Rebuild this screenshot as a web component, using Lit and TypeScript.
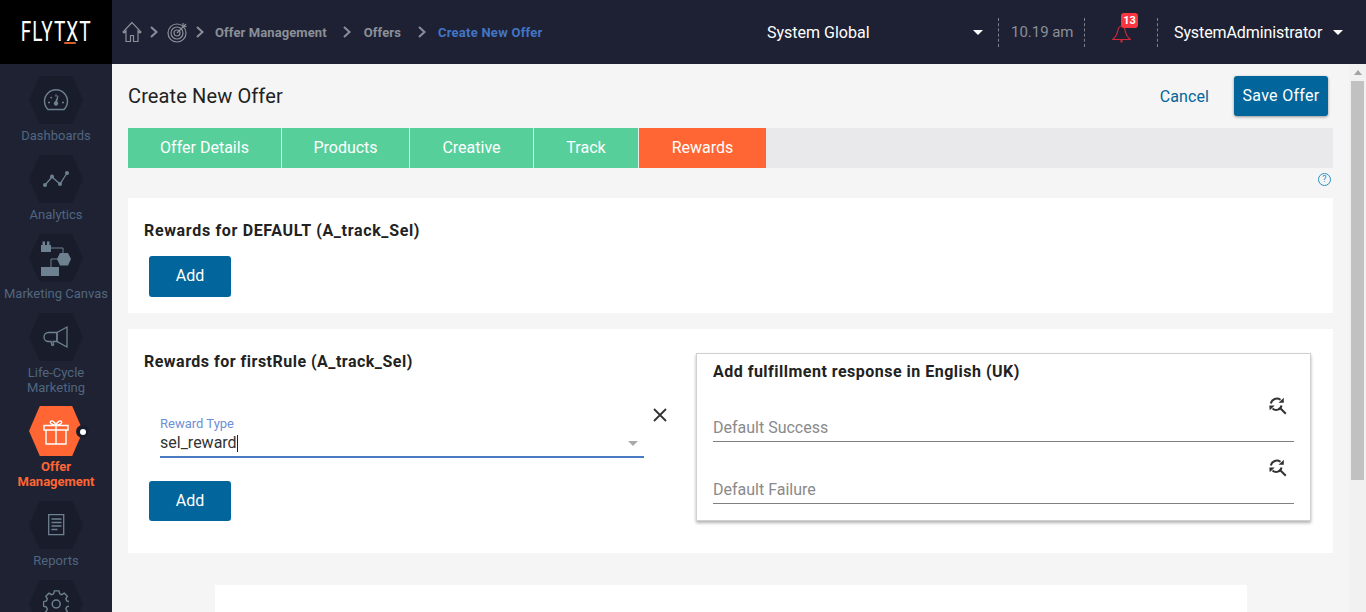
import { LitElement, html, css, svg } from "lit";
import { customElement } from "lit/decorators.js";

const chev = html`<svg class="chev" width="8" height="12" viewBox="0 0 8 12"><path d="M1 1l5.500 5L1 11" fill="none" stroke="#8b8f98" stroke-width="2"/></svg>`;
const caret = html`<svg class="caret" width="10" height="5" viewBox="0 0 10 5"><path d="M0 0h10L5 5z" fill="#fff"/></svg>`;
const refresh = html`<svg class="rs" width="18" height="18" viewBox="0 0 18 18"><g fill="none" stroke="#333" stroke-width="2"><path d="M1.800 6.500A6.200 6.200 0 0 1 11.500 2.800"/><path d="M12.500 8.500a5.400 5.400 0 0 1-9 3"/><path d="M11 11l5.800 5.800"/></g><path d="M9.500 5.800h5.300V.8zM.3 8.500h5.400l-5 4.800z" fill="#333"/></svg>`;

const I = "#6d8190";
const icons: Record<string, unknown> = {
  dash: svg`<g fill="none" stroke="${I}" stroke-width="1.400"><path d="M7 21.500a11.500 11.500 0 1 1 16 0z"/><path d="M15 6.500v2M7 14.500h2M21 14.500h2M9.500 9l1.300 1.300"/></g><path d="M13.600 15l3-7.500 .9.300-1.700 7.700z" fill="${I}"/><circle cx="15" cy="15.500" r="2.200" fill="${I}"/>`,
  ana: svg`<g fill="none" stroke="${I}" stroke-width="1.300"><path d="M4 21l7-8 8 7 7-11"/></g><g fill="${I}"><circle cx="4" cy="21" r="2"/><circle cx="11" cy="12.500" r="2"/><circle cx="19" cy="20" r="2"/><circle cx="26" cy="9" r="2"/></g>`,
  canvas: svg`<g fill="none" stroke="${I}" stroke-width="1"><path d="M10 7h12v6M19 18H10v9"/></g><g fill="${I}"><path d="M0 4h10v7H0zM1.500 0.500h2.500v4H1.500zM6 .5h2.500v4H6z"/><path d="M19 12h8l3 6-3 6.500h-8l-3-6.500z"/><path d="M0 26h18v9H0z"/></g>`,
  mega: svg`<g fill="none" stroke="${I}" stroke-width="1.300"><path d="M14 9.500H5.500a4.500 4.500 0 0 0 0 9H8l1 4 1.500-.5-.5-3.500h4z"/><path d="M14 9.500L24 4v20l-10-5.500z"/></g>`,
  gift: svg`<g fill="none" stroke="#fff" stroke-width="1.400"><path d="M3 14h20v14H3zM1 9.500h24V14H1zM13 9.500V28"/><path d="M13 9.500C9 9 6.500 7 7.500 5.500S12 5.500 13 9.500c1-4 4.500-5.500 5.500-4S17 9 13 9.500z"/></g>`,
  rep: svg`<g fill="none" stroke="${I}" stroke-width="1.300"><path d="M.7.700h15v20H.7zM3.500 5h10M3.500 8.500h10M3.500 12h10M3.500 15.500h6"/></g>`,
  gear: svg`<path d="M10.500 1h5l.8 3.200 2.300 1 2.800-1.700 3.400 3.500-1.700 2.800 1 2.300 3.200.8v5l-3.200.8-1 2.300 1.700 2.800-3.400 3.500-2.800-1.700-2.300 1-.8 3.200h-5l-.8-3.200-2.300-1-2.800 1.700L.9 24l1.700-2.800-1-2.300L-1.600 18v-5l3.200-.8 1-2.300L.9 7l3.500-3.500 2.800 1.700 2.300-1z" transform="translate(2 0) scale(.9)" fill="none" stroke="${I}" stroke-width="1.500"/><circle cx="13.200" cy="14" r="4" fill="none" stroke="${I}" stroke-width="1.500"/>`,
};

@customElement("app-root")
export class AppRoot extends LitElement {
  static styles = css`
    :host { display: block; width: 1366px; height: 612px; overflow: hidden; font-family: Roboto, "Liberation Sans", sans-serif; background: #f5f5f5; color: #222; }
    * { box-sizing: border-box; }
    .top { display: flex; height: 64px; background: #1e2133; align-items: center; }
    .logo { width: 112px; height: 64px; background: #000; display: flex; align-items: center; justify-content: center; flex: none; }
    .logo span { color: #fff; font-weight: 400; font-size: 28px; line-height: 32px; display: inline-block; transform: scaleX(.68); letter-spacing: 1.500px; white-space: nowrap; position: relative; }
    .logo i { position: absolute; left: 64px; bottom: 4px; width: 17px; height: 2px; background: #d6602c; box-shadow: 0 -1px #000; }
    .crumbs { display: flex; align-items: center; width: 512px; margin-left: 10px; font-size: 13px; font-weight: 700; letter-spacing: .1px; color: #8b8f98; white-space: nowrap; }
    .crumbs .cur { color: #4375c6; letter-spacing: .25px; }
    .chev { flex: none; }
    .sys { width: 206px; margin-left: 133px; font-size: 16px; color: #fff; white-space: nowrap; }
    .caret { flex: none; }
    .tsep { width: 0; height: 29px; border-left: 1px dashed #7d808a; flex: none; }
    .time { font-size: 15px; letter-spacing: -.03px; color: #8b8f98; width: 85px; padding-left: 12px; white-space: nowrap; }
    .bell { position: relative; width: 72px; height: 40px; flex: none; }
    .bell svg { position: absolute; left: 27px; top: 13px; }
    .badge { position: absolute; left: 36px; top: 1px; width: 17px; height: 15px; border-radius: 3px; background: #fb3640; color: #fff; font-size: 11px; font-weight: 700; text-align: center; line-height: 15px; }
    .user { font-size: 16px; letter-spacing: -.1px; color: #fff; margin-left: 16px; margin-right: 11px; white-space: nowrap; }
    .body { display: flex; height: 548px; overflow: hidden; }
    .side { width: 112px; flex: none; background: #1e2233; height: 548px; overflow: hidden; }
    .item { padding-top: 12px; display: flex; flex-direction: column; align-items: center; font-size: 13px; line-height: 15px; color: #51667f; text-align: center; position: relative; white-space: nowrap; }
    .hex { width: 54px; height: 48px; background: #191d2b; clip-path: polygon(20% 0, 80% 0, 100% 50%, 80% 100%, 20% 100%, 0 50%); display: flex; align-items: center; justify-content: center; margin-bottom: 4px; flex: none; }
    .item.on { color: #ff6633; font-weight: 700; }
    .item.on .hex { background: #ff6633; height: 50px; margin: -1px 0 3px; }
    .dot { position: absolute; left: 76px; top: 30px; width: 13px; height: 13px; border-radius: 50%; background: #191d2b; display: flex; align-items: center; justify-content: center; }
    .dot::after { content: ""; width: 6px; height: 6px; border-radius: 50%; background: #fff; }
    .main { flex: 1; padding: 0 16px; min-width: 0; }
    .head { height: 64px; display: flex; align-items: center; }
    .head h1 { font-size: 20px; letter-spacing: .12px; font-weight: 400; margin: 0; flex: 1; color: #222; }
    .cancel { color: #02659b; font-size: 16px; letter-spacing: .1px; margin-right: 25px; }
    .btn { background: #02659b; color: #fff; font-size: 16px; border-radius: 3px; display: flex; align-items: center; justify-content: center; flex: none; padding-bottom: 2px; }
    .save { width: 94px; height: 40px; margin-right: 5px; letter-spacing: .3px; box-shadow: 0 1px 3px rgba(0,0,0,.4); }
    .tabs { display: flex; height: 40px; background: #e9e9eb; gap: 1px; }
    .tab { background: #56cf9b; color: #fff; font-size: 16px; display: flex; align-items: center; justify-content: center; flex: none; padding-bottom: 2px; }
    .tab.on { background: #ff6633; }
    .help { height: 30px; display: flex; justify-content: flex-end; align-items: flex-start; padding: 5px 2px 0 0; }
    .help span { width: 13px; height: 13px; border: 1px solid #2a8fc4; border-radius: 50%; color: #2a8fc4; font-size: 9px; line-height: 11px; text-align: center; }
    .card { background: #fff; margin-bottom: 16px; }
    .c1 { height: 115px; padding: 23px 16px 0; }
    h3 { font-size: 16px; font-weight: 700; letter-spacing: .49px; line-height: 20px; margin: 0; color: #222; white-space: nowrap; }
    .c1 h3 { letter-spacing: .66px; }
    .add { width: 82px; height: 41px; margin: 15px 0 0 5px; }
    .c2 { height: 224px; display: flex; }
    .left { width: 568px; flex: none; padding: 23px 0 0 16px; position: relative; }
    .field { margin: 45px 0 0 16px; width: 484px; border-bottom: 2px solid #4b7ac4; height: 41px; position: relative; }
    .field label { display: block; font-size: 13px; line-height: 14px; color: #6c8fd6; }
    .field .val { font-size: 16px; line-height: 20px; color: #333; margin-top: 2px; display: flex; align-items: center; }
    .cursor { width: 1px; height: 17px; background: #222; }
    .arrow { position: absolute; right: 6px; top: 24px; }
    .x { position: absolute; left: 525px; top: 79px; }
    .left .add { margin: 23px 0 0 5px; height: 40px; }
    .resp { width: 615px; height: 168px; margin-top: 24px; border: 1px solid #d0d0d0; box-shadow: 0 2px 3px rgba(0,0,0,.3); padding: 8px 16px 0; }
    .row { height: 62px; border-bottom: 1px solid #808080; position: relative; font-size: 16px; color: #8a8a8a; display: flex; align-items: flex-end; padding-bottom: 3px; line-height: 20px; }
    .row .rs { position: absolute; right: 7px; top: 17px; }
    .row.first { height: 60px; }
    .row.first .rs { top: 15px; }
    .c3 { width: 1032px; height: 40px; margin: 32px 0 0 87px; }
    .sb { width: 17px; flex: none; background: #f1f1f1; position: relative; display: flex; flex-direction: column; align-items: center; }
    .sb .up { margin-top: 6px; width: 0; height: 0; border: 4px solid transparent; border-top: 0; border-bottom: 5px solid #a3a3a3; }
    .sb .thumb { width: 13px; height: 399px; margin-top: 6px; background: #c1c1c1; }
  `;

  private nav(icon: string, w: number, h: number, label: unknown, cls = "") {
    return html`<div class="item ${cls}"><div class="hex"><svg width="${w}" height="${h}" viewBox="0 0 ${w} ${h}">${icons[icon]}</svg></div>${cls.includes("on") ? html`<span class="dot"></span>` : ""}<div>${label}</div></div>`;
  }

  render() {
    return html`
      <div class="top">
        <div class="logo"><span>FLYTXT<i></i></span></div>
        <div class="crumbs">
          <svg width="20" height="22" viewBox="0 0 20 22"><path d="M10 1.500L1 11l1 1 2-2v10.500h4.500V14.500h3v6H16V10l2 2 1-1z" fill="none" stroke="#8b8f98" stroke-width="1.200"/></svg>
          ${chev2(8, 9)}
          <svg width="21" height="22" viewBox="0 0 21 22" fill="none" stroke="#8b8f98" stroke-width="1.200"><circle cx="10" cy="12" r="9"/><circle cx="10" cy="12" r="6"/><circle cx="10" cy="12" r="3"/><path d="M10 12l9-9M16 2v3.500h3.500" /></svg>
          ${chev2(8, 11)}
          <span>Offer Management</span>
          ${chev2(16, 13)}
          <span>Offers</span>
          ${chev2(17, 12)}
          <span class="cur">Create New Offer</span>
        </div>
        <div class="sys">System Global</div>
        ${caret}
        <div class="tsep" style="margin-left:15px"></div>
        <div class="time">10.19 am</div>
        <div class="tsep"></div>
        <div class="bell">
          <svg width="19" height="18" viewBox="0 0 19 18" fill="none" stroke="#d0293a" stroke-width="1.200"><path d="M9.500 1C6.500 1 6 3.500 5.500 7 5 10 3 12.500.8 14.500h17.400C16 12.500 14 10 13.500 7 13 3.500 12.500 1 9.500 1z"/><path d="M9.500 14.500v3" stroke-width="2"/></svg>
          <span class="badge">13</span>
        </div>
        <div class="tsep"></div>
        <div class="user">SystemAdministrator</div>
        ${caret}
      </div>
      <div class="body">
        <div class="side">
          ${this.nav("dash", 30, 24, "Dashboards")}
          ${this.nav("ana", 30, 30, "Analytics")}
          ${this.nav("canvas", 30, 35, "Marketing Canvas")}
          ${this.nav("mega", 26, 28, html`Life-Cycle<br />Marketing`)}
          ${this.nav("gift", 26, 30, html`Offer<br />Management`, "on")}
          ${this.nav("rep", 17, 22, "Reports")}
          ${this.nav("gear", 26, 28, "Settings")}
        </div>
        <div class="main">
          <div class="head">
            <h1>Create New Offer</h1>
            <span class="cancel">Cancel</span>
            <div class="btn save">Save Offer</div>
          </div>
          <div class="tabs">
            <div class="tab" style="width:153px">Offer Details</div>
            <div class="tab" style="width:127px">Products</div>
            <div class="tab" style="width:123px">Creative</div>
            <div class="tab" style="width:104px">Track</div>
            <div class="tab on" style="width:127px">Rewards</div>
          </div>
          <div class="help"><span>?</span></div>
          <div class="card c1">
            <h3>Rewards for DEFAULT (A_track_Sel)</h3>
            <div class="btn add">Add</div>
          </div>
          <div class="card c2">
            <div class="left">
              <h3>Rewards for firstRule (A_track_Sel)</h3>
              <svg class="x" width="14" height="14" viewBox="0 0 14 14"><path d="M1 1l12 12M13 1L1 13" stroke="#333" stroke-width="1.800"/></svg>
              <div class="field">
                <label>Reward Type</label>
                <div class="val">sel_reward<span class="cursor"></span></div>
                <svg class="arrow" width="10" height="5" viewBox="0 0 10 5"><path d="M0 0h10L5 5z" fill="#aaa"/></svg>
              </div>
              <div class="btn add">Add</div>
            </div>
            <div class="resp">
              <h3>Add fulfillment response in English (UK)</h3>
              <div class="row first">Default Success ${refresh}</div>
              <div class="row">Default Failure ${refresh}</div>
            </div>
          </div>
          <div class="card c3"></div>
        </div>
        <div class="sb"><div class="up"></div><div class="thumb"></div></div>
      </div>
    `;
  }
}

function chev2(ml: number, mr: number) {
  return html`<span style="display:flex;margin-left:${ml}px;margin-right:${mr}px">${chev}</span>`;
}
